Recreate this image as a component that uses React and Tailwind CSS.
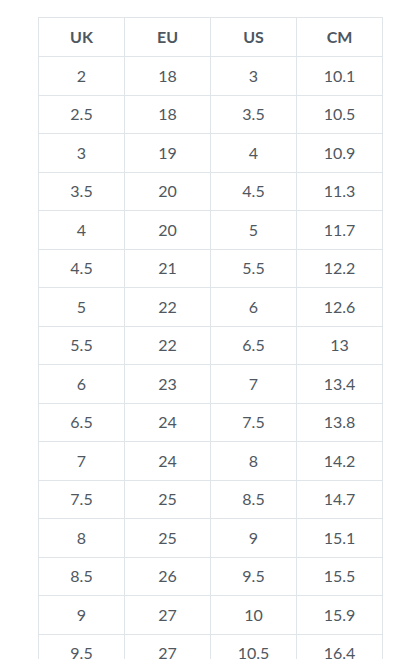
import React from "react";

const rows = [
  ["2", "18", "3", "10.1"],
  ["2.5", "18", "3.5", "10.5"],
  ["3", "19", "4", "10.9"],
  ["3.5", "20", "4.5", "11.3"],
  ["4", "20", "5", "11.7"],
  ["4.5", "21", "5.5", "12.2"],
  ["5", "22", "6", "12.6"],
  ["5.5", "22", "6.5", "13"],
  ["6", "23", "7", "13.4"],
  ["6.5", "24", "7.5", "13.8"],
  ["7", "24", "8", "14.2"],
  ["7.5", "25", "8.5", "14.7"],
  ["8", "25", "9", "15.1"],
  ["8.5", "26", "9.5", "15.5"],
  ["9", "27", "10", "15.9"],
  ["9.5", "27", "10.5", "16.4"],
  ["10", "28", "11", "16.8"],
];

export default function App() {
  return (
    <div className="h-[659px] overflow-hidden bg-white pt-[17px] pl-[38px] font-['Source_Sans_Pro','Lato','Noto_Sans',sans-serif]">
      <div className="w-[345px] border-l border-t border-[#dfe5e8]">
        <div className="grid grid-cols-4">
          {["UK", "EU", "US", "CM"].map((h) => (
            <div
              key={h}
              className="flex h-[39px] items-center justify-center border-r border-b border-[#dfe5e8] text-[16px] font-bold text-[#4d5761]"
            >
              {h}
            </div>
          ))}
        </div>
        {rows.map((r, i) => (
          <div key={i} className="grid grid-cols-4">
            {r.map((c, j) => (
              <div
                key={j}
                className="flex h-[38.5px] items-center justify-center border-r border-b border-[#dfe5e8] text-[16px] text-[#4f5861]"
              >
                {c}
              </div>
            ))}
          </div>
        ))}
      </div>
    </div>
  );
}
